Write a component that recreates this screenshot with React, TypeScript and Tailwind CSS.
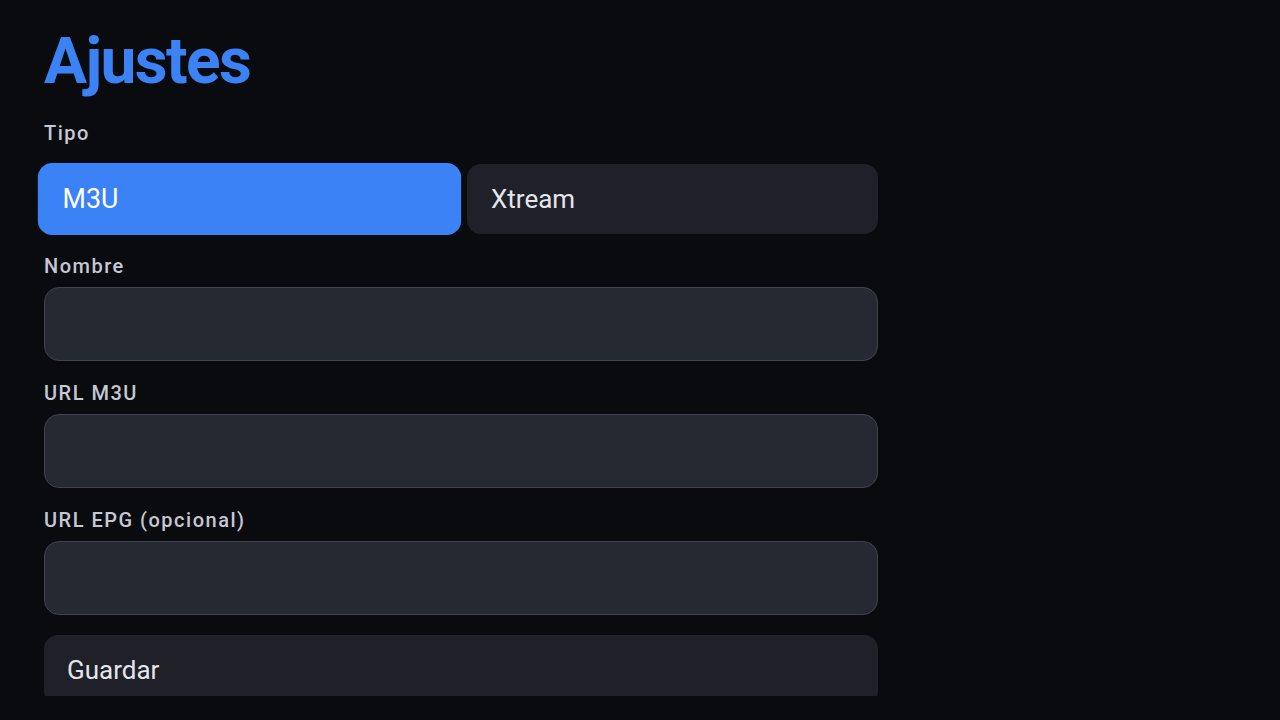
import React from "react";

function Label({ children, className = "" }: { children: React.ReactNode; className?: string }) {
  return (
    <div className={`h-[24px] text-[20px] leading-[24px] font-medium tracking-[1.5px] text-[#c5c8d3] ${className}`}>
      {children}
    </div>
  );
}

function Field({ label }: { label: string }) {
  return (
    <div className="flex flex-col">
      <Label className="mb-[9px]">{label}</Label>
      <div className="h-[74px] rounded-[15px] border border-[#41444e] bg-[#262931]" />
    </div>
  );
}

export default function App() {
  return (
    <div
      className="h-[720px] w-[1280px] bg-[#0a0b0f] pb-[24px]"
      style={{ fontFamily: "Roboto, 'Noto Sans', sans-serif" }}
    >
      <div className="h-full overflow-hidden px-[44px] pt-[30px]">
        <div className="flex w-[834px] flex-col">
          <h1 className="h-[64px] text-[64px] font-bold leading-[64px] tracking-[-1.6px] text-[#3b82f6]">Ajustes</h1>
          <Label className="mt-[27px]">Tipo</Label>
          <div className="mt-[19px] flex gap-[12px]">
            <button className="flex h-[70px] flex-1 scale-[1.03] items-center rounded-[14px] bg-[#3b82f6] px-[24px] text-left text-[26px] text-white">
              M3U
            </button>
            <button className="flex h-[70px] flex-1 items-center rounded-[14px] bg-[#1f2028] px-[24px] text-left text-[26px] text-[#e4e6ec]">
              Xtream
            </button>
          </div>
          <div className="mt-[20px] flex flex-col gap-[20px]">
            <Field label="Nombre" />
            <Field label="URL M3U" />
            <Field label="URL EPG (opcional)" />
            <button className="flex h-[70px] items-center rounded-[14px] bg-[#1f2028] px-[23px] text-left text-[26px] text-[#e4e6ec]">
              Guardar
            </button>
          </div>
        </div>
      </div>
    </div>
  );
}
